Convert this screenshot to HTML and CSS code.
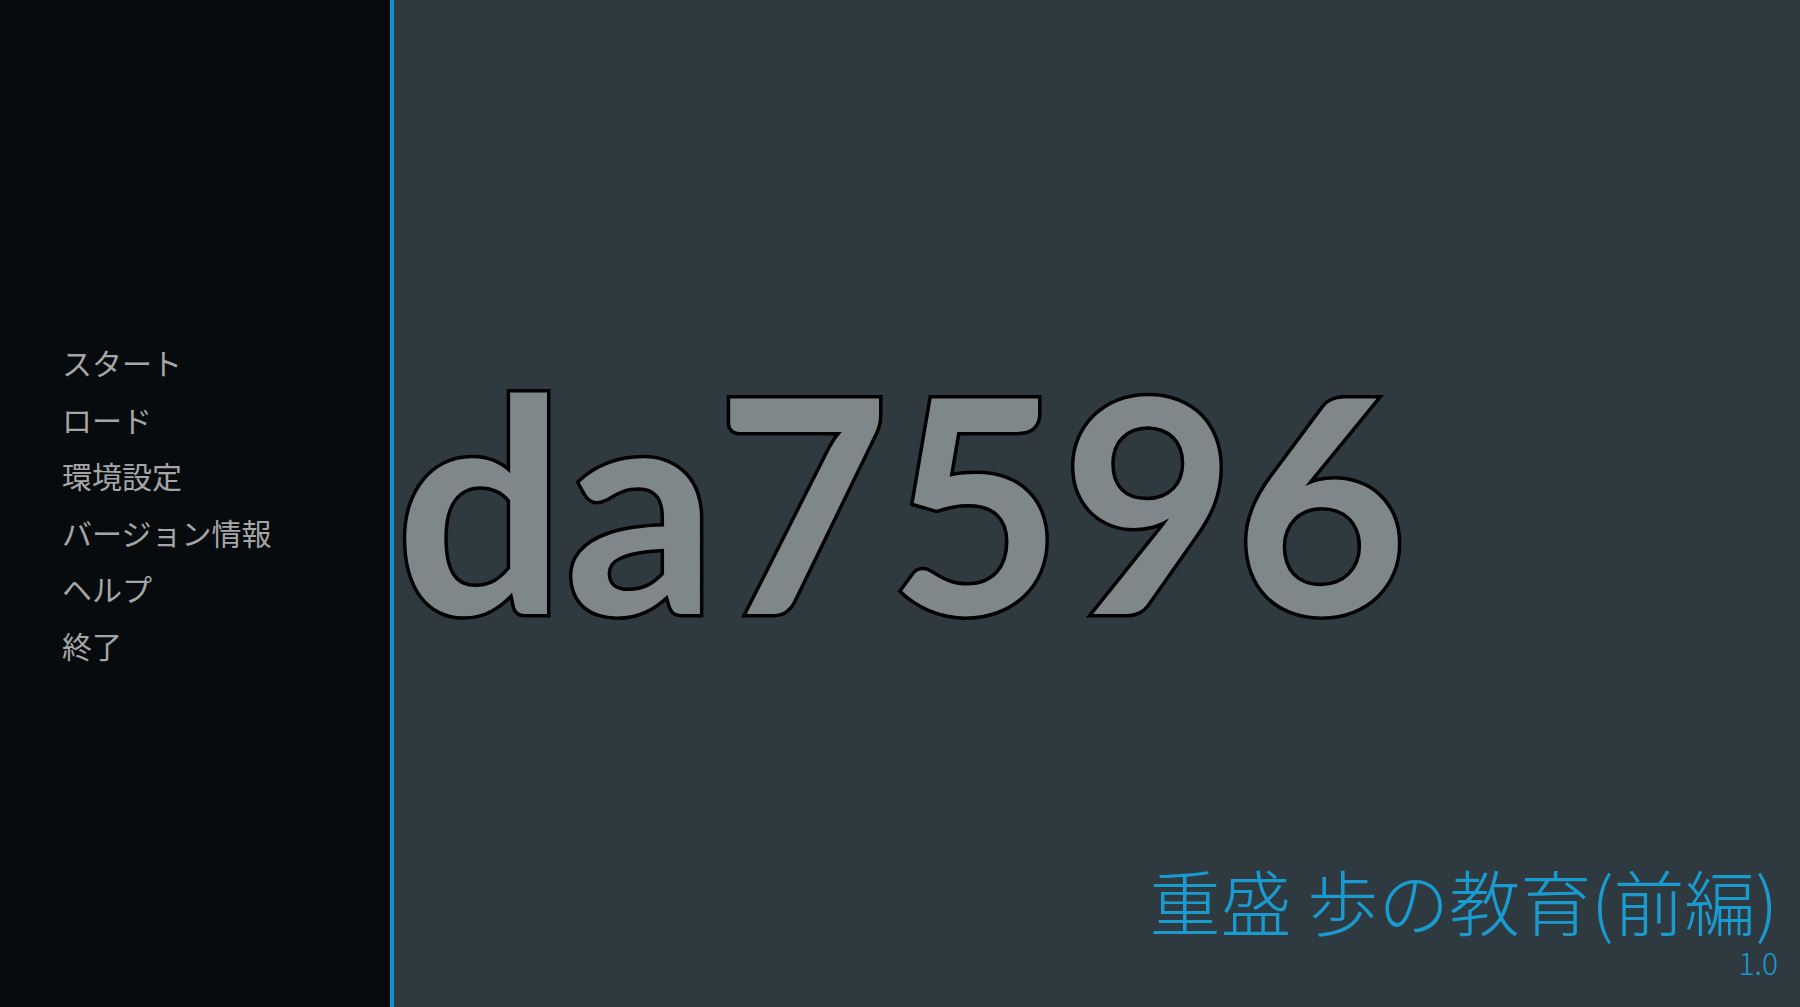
FILE: index.html
```html
<!DOCTYPE html>
<html lang="ja">
<head>
<meta charset="utf-8">
<title>重盛 歩の教育(前編)</title>
<link rel="stylesheet" href="styles.css">
</head>
<body>
<div class="screen">
  <nav class="sidebar">
    <ul class="menu">
      <li class="menu-item">スタート</li>
      <li class="menu-item">ロード</li>
      <li class="menu-item">環境設定</li>
      <li class="menu-item">バージョン情報</li>
      <li class="menu-item">ヘルプ</li>
      <li class="menu-item">終了</li>
    </ul>
  </nav>
  <main class="stage">
    <div class="logo">da7596</div>
    <div class="info">
      <div class="game-title">重盛 歩の教育(前編)</div>
      <div class="game-version">1.0</div>
    </div>
  </main>
</div>
</body>
</html>
```
FILE: styles.css
```css
html, body {
  margin: 0;
  padding: 0;
  width: 100%;
  height: 100%;
  overflow: hidden;
}
body {
  font-family: "Noto Sans CJK JP", "Noto Sans", sans-serif;
  background: #2f3a40;
}
.screen {
  display: flex;
  width: 1800px;
  height: 1007px;
}
.sidebar {
  width: 390px;
  flex: none;
  background: #080b0d;
  border-right: 4px solid #0f93c8;
  display: flex;
  flex-direction: column;
  justify-content: center;
}
.menu {
  list-style: none;
  margin: 0;
  padding: 0 0 0 62px;
  display: flex;
  flex-direction: column;
  gap: 26.5px;
}
.menu-item {
  font-size: 30px;
  line-height: 30px;
  font-weight: 400;
  color: #a4a6a7;
  white-space: nowrap;
}
.stage {
  flex: 1;
  display: flex;
  flex-direction: column;
  background: #2f3a40;
  min-width: 0;
}
.logo {
  margin-top: 350px;
  margin-left: 2px;
  font-family: Lato, "Noto Sans", sans-serif;
  font-size: 298px;
  line-height: 1;
  font-weight: 700;
  color: #7f878b;
  -webkit-text-stroke: 7px #000;
  paint-order: stroke fill;
  white-space: nowrap;
}
.info {
  margin-top: auto;
  align-self: flex-end;
  text-align: right;
  padding: 0 22px 30px 0;
  color: #1a9bd0;
}
.game-title {
  font-size: 71px;
  line-height: 70px;
  font-weight: 300;
  white-space: nowrap;
}
.game-version {
  margin-top: 13px;
  font-size: 30px;
  line-height: 30px;
  font-weight: 300;
}
```
